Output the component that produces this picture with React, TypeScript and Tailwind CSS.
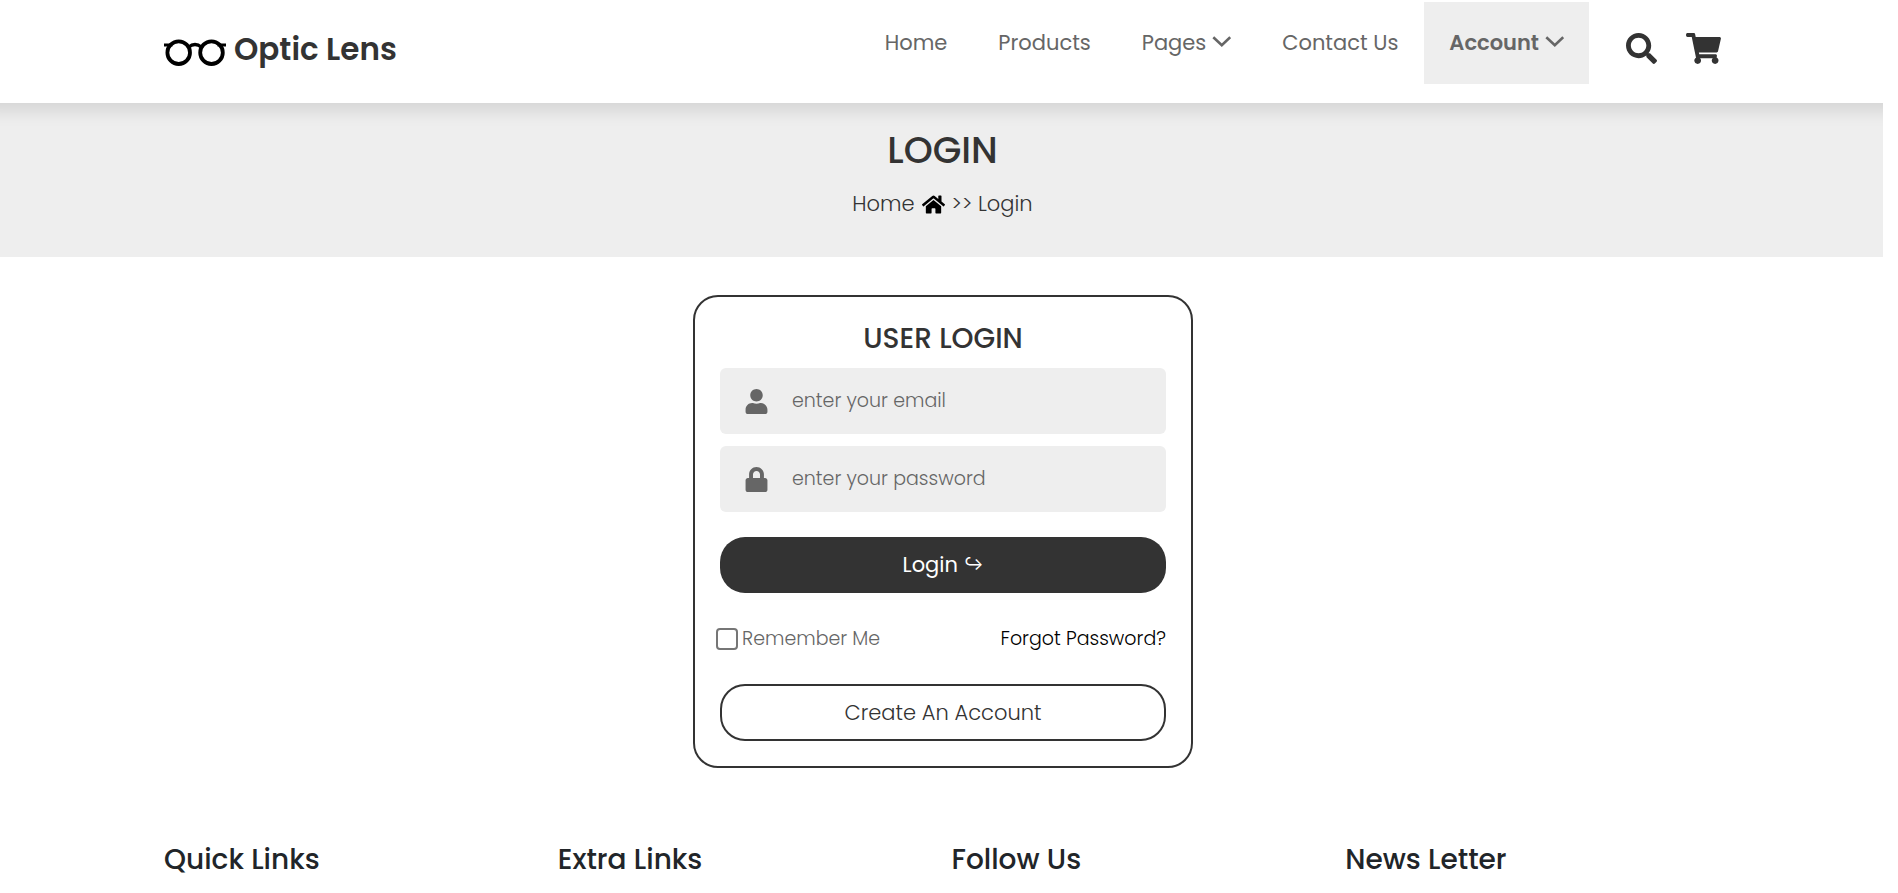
import React from "react";
import { FaHome, FaLock, FaSearch, FaShoppingCart, FaUser } from "react-icons/fa";

const navLinks = [
  { label: "Home", menu: false },
  { label: "Products", menu: false },
  { label: "Pages", menu: true },
  { label: "Contact Us", menu: false },
];

const footerColumns = ["Quick Links", "Extra Links", "Follow Us", "News Letter"];

function Glasses() {
  return (
    <svg viewBox="0 0 62 32" className="h-8 w-[62px]" fill="none" stroke="#000" strokeWidth="3.8" aria-hidden="true">
      <circle cx="14.7" cy="18.7" r="11.3" />
      <circle cx="47.5" cy="18.7" r="11.3" />
      <path d="M24.5 13.2Q31 7.7 37.5 13.2" strokeWidth="3.4" />
      <path d="M0 11H8.5M53.5 11H62" strokeWidth="3.2" />
    </svg>
  );
}

function Chevron() {
  return (
    <svg viewBox="0 0 19 18" className="h-[18px] w-[19px]" fill="none" stroke="currentColor" strokeWidth="2.6" aria-hidden="true">
      <path d="M1.3 3.2L9.8 11.2L18.2 3.2" />
    </svg>
  );
}

function Header() {
  return (
    <header className="relative flex h-[103px] justify-between bg-white pr-[162px] pl-[164px] shadow-[0_-8px_16px_16px_rgba(0,0,0,0.11)]">
      <a href="#" className="flex items-center gap-2 pb-1 text-[31px] font-semibold text-[#333]">
        <Glasses />
        Optic Lens
      </a>
      <div className="flex">
        <nav className="flex items-start gap-px pt-[2px] text-[21px] leading-8 text-[#666]">
          {navLinks.map((l) => (
            <a key={l.label} href="#" className="flex items-center gap-1.5 px-[25px] py-[25px]">
              {l.label}
              {l.menu && <Chevron />}
            </a>
          ))}
          <a href="#" className="flex items-center gap-1.5 bg-[#eee] px-[25px] py-[25px] font-semibold">
            Account
            <Chevron />
          </a>
        </nav>
        <div className="flex items-center gap-[29px] pb-[7px] pl-[37px] text-[#333]">
          <button type="button" aria-label="Search"><FaSearch className="size-[31px]" /></button>
          <a href="#" aria-label="Cart"><FaShoppingCart className="h-[31px] w-[35px]" /></a>
        </div>
      </div>
    </header>
  );
}

export default function App() {
  return (
    <div className="bg-white pr-[15px] font-['Poppins','Inter',sans-serif]">
      <div className="overflow-hidden">
        <Header />
        <section className="flex h-[154px] flex-col items-center bg-[#eee] pt-6 pl-0.5 text-[#333]">
          <h1 className="text-[37px] leading-[46px] font-medium">LOGIN</h1>
          <p className="mt-[15px] flex items-center gap-[7px] text-[21px] leading-8 font-light">
            <a href="#">Home</a>
            <FaHome className="size-[23px] text-black" />
            <span>&gt;&gt; Login</span>
          </p>
        </section>
      </div>

      <main className="flex justify-center pt-[38px] pb-[76px] pl-[3px]">
        <form className="w-[500px] rounded-[25px] border-2 border-[#333] p-[25px]">
          <h2 className="text-center text-[28px] leading-[34px] font-medium text-[#333]">USER LOGIN</h2>
          <div className="mt-3 flex flex-col gap-3">
            <label className="flex h-[66px] items-center rounded-md bg-[#eee] pl-6 text-[#666]">
              <FaUser size={25} />
              <input type="email" aria-label="Email" placeholder="enter your email" className="ml-[23px] min-w-0 flex-1 bg-transparent text-[19px] font-light outline-none placeholder:text-[#666]" />
            </label>
            <label className="flex h-[66px] items-center rounded-md bg-[#eee] pl-6 text-[#666]">
              <FaLock size={25} />
              <input type="password" aria-label="Password" placeholder="enter your password" className="ml-[23px] min-w-0 flex-1 bg-transparent text-[19px] font-light outline-none placeholder:text-[#666]" />
            </label>
          </div>
          <button type="submit" className="mt-[25px] flex h-14 w-full items-center justify-center gap-1.5 rounded-[25px] bg-[#333] text-[21px] text-white">
            Login <span className="text-[17px]">↪</span>
          </button>
          <div className="mt-[30px] mb-[29px] flex h-8 items-center justify-between text-[19px] font-light">
            <label className="-ml-1 flex items-center gap-1 text-[#666]">
              <input type="checkbox" className="size-[22px] appearance-none rounded border-2 border-[#767676] bg-white checked:bg-[#333]" />
              Remember Me
            </label>
            <a href="#" className="text-black">Forgot Password?</a>
          </div>
          <button type="button" className="h-[57px] w-full rounded-[25px] border-2 border-[#333] text-[21px] font-light text-[#333]">
            Create An Account
          </button>
        </form>
      </main>

      <footer className="grid grid-cols-4 gap-5 px-[164px] text-[#212529]">
        {footerColumns.map((t) => (
          <h3 key={t} className="text-[28px] leading-8 font-medium">{t}</h3>
        ))}
      </footer>
    </div>
  );
}
